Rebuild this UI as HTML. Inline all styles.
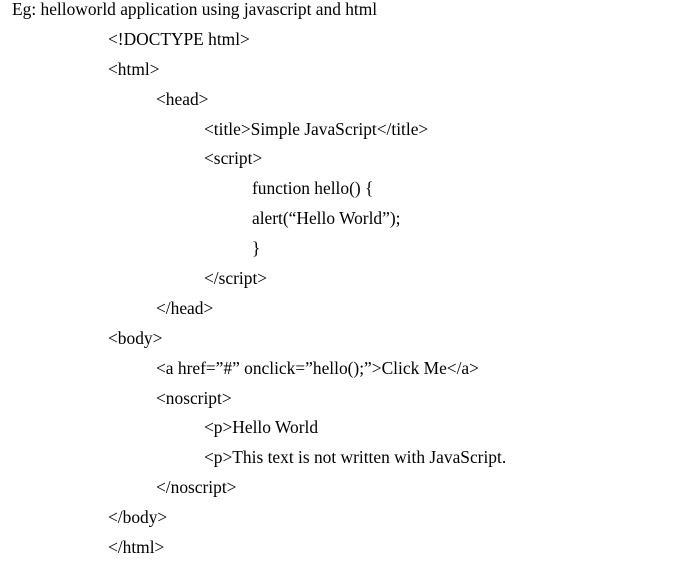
<!DOCTYPE html>
<html><head><style>
body{margin:0;background:#fff;width:690px;height:563px;overflow:hidden;font-family:"Liberation Serif",serif;font-size:17.4px;color:#000}
.w{position:absolute;top:-6px;left:0}
.l{height:29.9px;line-height:30px;white-space:pre}
</style></head><body><div class="w">
<div class="l" style="padding-left:12px">Eg: helloworld application using javascript and html</div>
<div class="l" style="padding-left:108px">&lt;!DOCTYPE html&gt;</div>
<div class="l" style="padding-left:108px">&lt;html&gt;</div>
<div class="l" style="padding-left:156px">&lt;head&gt;</div>
<div class="l" style="padding-left:204px">&lt;title&gt;Simple JavaScript&lt;/title&gt;</div>
<div class="l" style="padding-left:204px">&lt;script&gt;</div>
<div class="l" style="padding-left:252px">function hello() {</div>
<div class="l" style="padding-left:252px">alert(“Hello World”);</div>
<div class="l" style="padding-left:252px">}</div>
<div class="l" style="padding-left:204px">&lt;/script&gt;</div>
<div class="l" style="padding-left:156px">&lt;/head&gt;</div>
<div class="l" style="padding-left:108px">&lt;body&gt;</div>
<div class="l" style="padding-left:156px">&lt;a href=”#” onclick=”hello();”&gt;Click Me&lt;/a&gt;</div>
<div class="l" style="padding-left:156px">&lt;noscript&gt;</div>
<div class="l" style="padding-left:204px">&lt;p&gt;Hello World</div>
<div class="l" style="padding-left:204px">&lt;p&gt;This text is not written with JavaScript.</div>
<div class="l" style="padding-left:156px">&lt;/noscript&gt;</div>
<div class="l" style="padding-left:108px">&lt;/body&gt;</div>
<div class="l" style="padding-left:108px">&lt;/html&gt;</div>
</div></body></html>
